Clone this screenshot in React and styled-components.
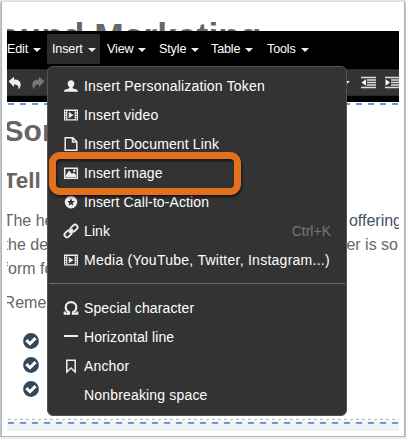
import React from "react";
import styled, { createGlobalStyle } from "styled-components";

const GlobalStyle = createGlobalStyle`
  * {
    box-sizing: border-box;
  }
  body {
    margin: 0;
    background: #ececec;
    font-family: "Liberation Sans", Arial, sans-serif;
    overflow: hidden;
  }
`;

const Window = styled.div`
  width: 404px;
  height: 436px;
  margin: 1px 0 0 1px;
  padding-left: 5px;
  background: #fff;
  border: 1px solid #b4b4b4;
  border-top-color: #dcdcdc;
  box-shadow: 0 1px 2px rgba(0, 0, 0, 0.5);
`;

const Editor = styled.div`
  position: relative;
  width: 392px;
  height: 429px;
  overflow: hidden;
  display: flex;
  flex-direction: column;
  color: #666;
`;

const PageTitle = styled.div`
  height: 29px;
  flex: none;
  overflow: hidden;
  padding-top: 13px;
  text-indent: -9px;
  font-size: 35.4px;
  line-height: 42px;
  font-weight: bold;
  white-space: nowrap;
`;

const Bars = styled.div`
  height: 71px;
  flex: none;
  background: #000;
  padding-top: 3px;
`;

const MenuBar = styled.div`
  display: flex;
  height: 30px;
`;

const MenuButton = styled.div`
  width: ${(props) => props.$width}px;
  margin-left: ${(props) => props.$gap || 0}px;
  display: flex;
  align-items: center;
  gap: 5px;
  font-size: 12.6px;
  letter-spacing: -0.15px;
  color: #fff;
  padding-left: 5px;
  background: ${(props) => (props.$open ? "#2b2b2b" : "transparent")};
  white-space: nowrap;
`;

const Caret = styled.span`
  border: 4px solid transparent;
  border-top-color: #eee;
  border-bottom: 0;
  margin-top: 1px;
`;

const ToolBar = styled.div`
  margin-top: 5px;
  height: 27px;
  display: flex;
  align-items: center;
  background: #333;
  border-top: 1px solid #25292c;
  border-bottom: 1px solid #25292c;
  padding-left: 1px;
  overflow: hidden;
  svg {
    flex: none;
  }
`;

const ToolGap = styled.div`
  width: ${(props) => props.$width}px;
  flex: none;
`;

const Dashes = styled.div`
  flex: none;
  height: ${(props) => props.$height}px;
  margin: ${(props) => props.$margin || "0"};
  background: repeating-linear-gradient(
    to right,
    ${(props) => props.$color} 0 ${(props) => props.$dash}px,
    transparent ${(props) => props.$dash}px ${(props) => props.$dash * 2}px
  );
`;

const Body = styled.div`
  height: 314px;
  flex: none;
  overflow: hidden;
  white-space: nowrap;
`;

const Heading = styled.div`
  font-weight: bold;
  font-size: ${(props) => props.$size}px;
  line-height: 40px;
  margin-left: -3.4px;
  margin-top: ${(props) => props.$top}px;
`;

const Line = styled.div`
  display: flex;
  justify-content: space-between;
  font-size: 16px;
  line-height: 24px;
  margin-left: -3.4px;
  margin-top: ${(props) => props.$top || 0}px;
`;

const LineEnd = styled.span`
  color: ${(props) => props.$color || "inherit"};
  margin-right: ${(props) => props.$right}px;
`;

const CheckList = styled.div`
  display: flex;
  flex-direction: column;
  gap: 8px;
  margin: 18px 0 0 16px;
  svg {
    display: block;
  }
`;

const Footer = styled.div`
  height: 10px;
  flex: none;
  background: #f1f1f1;
  padding-top: 1px;
`;

const Menu = styled.div`
  position: absolute;
  left: 40px;
  top: 64px;
  width: 300px;
  height: 350px;
  padding-top: 4px;
  background: #333;
  border: 1px solid #555;
  border-radius: 6px;
  color: #fff;
  font-size: 14px;
`;

const MenuItem = styled.div`
  display: flex;
  align-items: center;
  height: 29px;
  padding: 0 15px 0 16px;
  white-space: nowrap;
`;

const IconBox = styled.span`
  width: 14px;
  height: 14px;
  margin-right: 6px;
  flex: none;
  color: #eee;
  svg {
    display: block;
  }
`;

const Label = styled.span`
  letter-spacing: ${(props) => props.$spacing}px;
`;

const Shortcut = styled.span`
  margin-left: auto;
  color: #777;
`;

const Separator = styled.div`
  height: 1px;
  margin: 9px 1px;
  background: #6a6a6a;
`;

const Highlight = styled.div`
  position: absolute;
  left: 42px;
  top: 150px;
  width: 192px;
  height: 43px;
  border: 7px solid #e4701e;
  border-radius: 11px;
  box-shadow: 1px 2px 3px rgba(0, 0, 0, 0.6),
    inset 1px 2px 3px rgba(0, 0, 0, 0.6);
`;

const icons = {
  user: (
    <path
      fill="currentColor"
      d="M7 1.2c2.100 0 3.300 1.300 3.300 3.200 0 1.700-.8 2.800-1.600 3.700v1.100l4.300 1.500c.8.300 1 1.200 1 2.100H0c0-.9.2-1.800 1-2.100l4.300-1.500V8.100C4.500 7.200 3.700 6.100 3.700 4.400 3.700 2.500 4.900 1.200 7 1.200z"
    />
  ),
  film: (
    <>
      <path
        fill="currentColor"
        fillRule="evenodd"
        d="M0 1.500h14v11H0z M1 3v1.200h1.200V3z M1 5.500v1.200h1.200V5.500z M1 8v1.200h1.200V8z M1 10.300v1.200h1.200v-1.200z M11.800 3v1.200H13V3z M11.800 5.500v1.200H13V5.500z M11.800 8v1.200H13V8z M11.800 10.300v1.200H13v-1.200z M3.300 3v8.200h7.400V3z"
      />
      <path fill="currentColor" d="M4.800 4l4.700 3.100-4.700 3.100z" />
    </>
  ),
  file: (
    <path
      fill="none"
      stroke="currentColor"
      strokeWidth="1.500"
      d="M1.200 .8h7.600l4 4v8.500H1.200z M8.500 .8v4.300h4.200"
    />
  ),
  image: (
    <>
      <path fill="none" stroke="currentColor" strokeWidth="1.500" d="M.7 2.200h12.600v10H.7z" />
      <path fill="currentColor" d="M2 11V9l3-4.500L8 8l1.700-1.500L12 9v2z" />
      <circle cx="10.300" cy="4.800" r="1.200" fill="currentColor" />
    </>
  ),
  star: (
    <path
      fill="currentColor"
      fillRule="evenodd"
      d="M7 .8a6.300 6.300 0 1 0 0 12.600A6.300 6.300 0 1 0 7 .8z M7 3.300l1.100 2.600 2.700.2-2.100 1.800.7 2.700L7 9.200l-2.400 1.400.7-2.700-2.100-1.800 2.700-.2z"
    />
  ),
  link: (
    <g fill="none" stroke="currentColor" strokeWidth="1.900" transform="rotate(-43 7 7)">
      <rect x="-1" y="4.500" width="7.800" height="5" rx="2.500" />
      <rect x="7.200" y="4.500" width="7.800" height="5" rx="2.500" />
      <path d="M4.500 7h5" />
    </g>
  ),
  omega: (
    <path
      fill="none"
      stroke="currentColor"
      strokeWidth="2.100"
      d="M.7 10.500v2.200h4.400v-1.400C3 10.300 1.700 8.500 1.700 6.200 1.700 3.100 4 1.100 7 1.100s5.300 2 5.300 5.100c0 2.300-1.300 4.100-3.400 5.100v1.400h4.400v-2.200"
    />
  ),
  line: <path stroke="currentColor" strokeWidth="2" d="M0 6h14" />,
  bookmark: (
    <path
      fill="none"
      stroke="currentColor"
      strokeWidth="1.500"
      d="M2.800 1.200h8.400v11.800L7 9l-4.200 4z"
    />
  ),
};

const items = [
  { icon: "user", label: "Insert Personalization Token", spacing: 0.19 },
  { icon: "film", label: "Insert video", spacing: 0.17 },
  { icon: "file", label: "Insert Document Link", spacing: 0.14 },
  { icon: "image", label: "Insert image", spacing: 0.14 },
  { icon: "star", label: "Insert Call-to-Action", spacing: 0.1 },
  { icon: "link", label: "Link", shortcut: "Ctrl+K", spacing: 0.1 },
  { icon: "film", label: "Media (YouTube, Twitter, Instagram...)", spacing: 0.26 },
  null,
  { icon: "omega", label: "Special character", spacing: 0.12 },
  { icon: "line", label: "Horizontal line", spacing: 0.1 },
  { icon: "bookmark", label: "Anchor", spacing: 0.15 },
  { label: "Nonbreaking space", spacing: 0.17 },
];

const Arrow = ({ color, flip }) => (
  <svg width="14" height="14" viewBox="0 0 14 14">
    <path
      fill={color}
      transform={flip ? "translate(14 0) scale(-1 1)" : undefined}
      d="M.5 5.300L6 .8v2.700c4.200 0 6.700 1.700 6.700 5.200 0 1.900-.9 3.500-2.300 4.600.6-3.200-.8-4.900-4.400-4.900v2.500z"
    />
  </svg>
);

const Indent = ({ right }) => (
  <svg width="15" height="13" viewBox="0 0 15 13">
    <path stroke="#ddd" strokeWidth="1.700" d="M0 1.500h15M6 4h9M6 6.500h9M6 9h9M0 11.500h15" />
    <path fill="#fff" d={right ? "M.5 3.200L5 6.500.5 9.800z" : "M5 3.200L.5 6.500 5 9.800z"} />
  </svg>
);

const Check = () => (
  <svg width="16" height="16" viewBox="0 0 16 16">
    <circle cx="8" cy="8" r="7.900" fill="#33475b" />
    <path fill="none" stroke="#fff" strokeWidth="3" d="M3.400 7.100l3.600 3.600 5.500-5.600" />
  </svg>
);

const App = () => {
  return (
    <>
      <GlobalStyle />
      <Window>
        <Editor>
          <PageTitle>ound Marketing</PageTitle>
          <Bars>
            <MenuBar>
              <MenuButton $width={45} $gap={-5}>Edit <Caret /></MenuButton>
              <MenuButton $width={53} $open>Insert <Caret /></MenuButton>
              <MenuButton $width={52} $gap={2}>View <Caret /></MenuButton>
              <MenuButton $width={52}>Style <Caret /></MenuButton>
              <MenuButton $width={56}>Table <Caret /></MenuButton>
              <MenuButton $width={56}>Tools <Caret /></MenuButton>
            </MenuBar>
            <ToolBar>
              <Arrow color="#eee" />
              <ToolGap $width={9} />
              <Arrow color="#777" flip />
              <ToolGap $width={297} />
              <Caret />
              <ToolGap $width={11} />
              <Indent />
              <ToolGap $width={9} />
              <Indent right />
            </ToolBar>
          </Bars>
          <Dashes $height={2} $dash={6} $color="#6a9bd8" $margin="1px 0 0 1px" />
          <Body>
            <Heading $size={30} $top={6}>Son</Heading>
            <Heading $size={22.5} $top={10}>Tell</Heading>
            <Line $top={8}>
              <span>The he</span>
              <LineEnd $color="#42526a" $right={-3}>, offering</LineEnd>
            </Line>
            <Line>
              <span>the de</span>
              <LineEnd $right={1}>fer is so</LineEnd>
            </Line>
            <Line>form fo</Line>
            <Line $top={10}>Reme</Line>
            <CheckList>
              <Check />
              <Check />
              <Check />
            </CheckList>
          </Body>
          <Dashes $height={1} $dash={3} $color="#b5b5b5" $margin="0 0 1px 1px" />
          <Footer>
            <Dashes $height={2} $dash={6} $color="#6a9bd8" $margin="0 0 0 1px" />
          </Footer>
          <Menu>
            {items.map((item, i) =>
              item ? (
                <MenuItem key={i}>
                  <IconBox>
                    {item.icon && (
                      <svg width="14" height="14" viewBox="0 0 14 14" overflow="visible">
                        {icons[item.icon]}
                      </svg>
                    )}
                  </IconBox>
                  <Label $spacing={item.spacing}>{item.label}</Label>
                  {item.shortcut && <Shortcut>{item.shortcut}</Shortcut>}
                </MenuItem>
              ) : (
                <Separator key={i} />
              )
            )}
          </Menu>
          <Highlight />
        </Editor>
      </Window>
    </>
  );
};

export default App;
